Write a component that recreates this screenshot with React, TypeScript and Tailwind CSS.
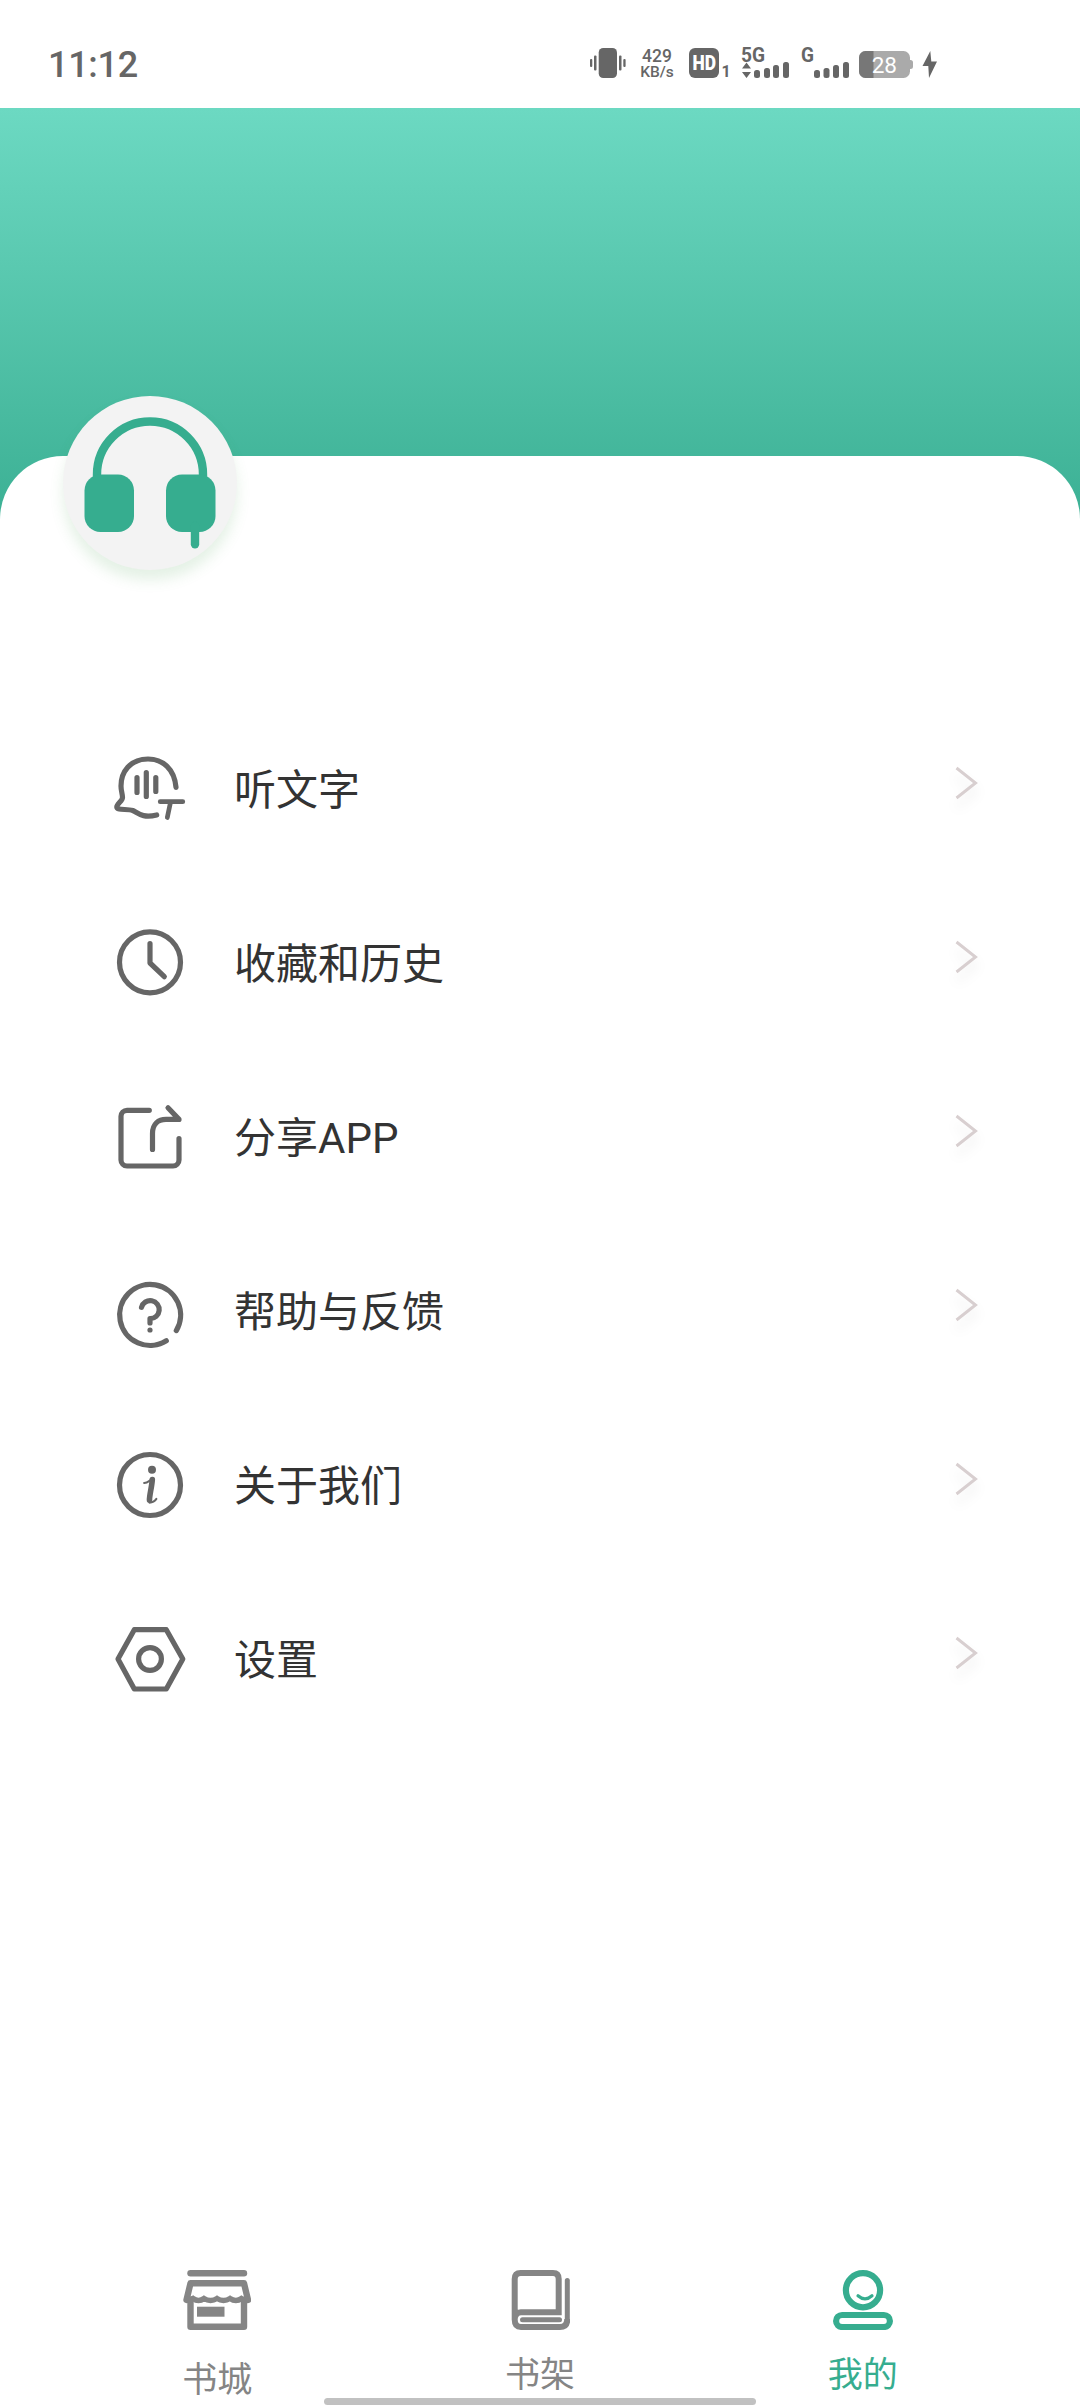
import type { ReactNode } from "react";

const menuItems: { label: string; icon: ReactNode }[] = [
  {
    label: "听文字",
    icon: (
      <>
        <path d="M66 38.3C64.5 20 53 10 38 10C20 10 11 23 11 37C11 42 12.5 45 12.5 48.5C12.5 52 6.8 55 6.8 58C7 61.8 17 59.5 22.7 61.5C28 63.8 32 69.5 46.7 66" />
        <path d="M27 28.5v15M36.3 23.5v24M45.8 28.5v14" />
        <path d="M50.2 52.7h22.6M60.3 54.3L57.3 68.5" strokeWidth={4.7} />
      </>
    ),
  },
  {
    label: "收藏和历史",
    icon: (
      <>
        <circle cx="40" cy="39.3" r="30.5" />
        <path d="M40 20.5V40L54.3 53.7" />
      </>
    ),
  },
  {
    label: "分享APP",
    icon: (
      <>
        <path d="M39.3 13.3H17a6 6 0 0 0-6 6V63a6 6 0 0 0 6 6H63a6 6 0 0 0 6-6V41.5" />
        <path d="M42.5 52.5V36.5C42.5 27 48.5 22.4 56 22.4H69L58 10.8" />
      </>
    ),
  },
  {
    label: "帮助与反馈",
    icon: (
      <>
        <path d="M66.3 59.6A30.5 30.5 0 1 0 56.3 69.8" />
        <path d="M31.5 36.3A9 9 0 1 1 40 47.6V52" />
        <circle cx="40" cy="59" r="2.6" fill="currentColor" stroke="none" />
      </>
    ),
  },
  {
    label: "关于我们",
    icon: (
      <>
        <circle cx="40" cy="40" r="30.5" />
        <circle cx="42" cy="24.7" r="4" fill="currentColor" stroke="none" />
        <path d="M42.3 34.5C41.8 42 39.3 51 39.5 55" strokeWidth={5.6} />
        <path d="M34.2 38C37 37.8 39 36 41.5 34.5M39.5 57.6C42.5 57.6 45 56 46.3 54" strokeWidth={2.2} />
      </>
    ),
  },
  {
    label: "设置",
    icon: (
      <>
        <path d="M8 40L24.3 10.7H56.3L72.8 40L56.3 70H24.3Z" />
        <circle cx="40" cy="40" r="11.4" />
      </>
    ),
  },
];

function StatusBar() {
  return (
    <header className="flex h-[108px] items-start pt-12 pl-12 font-[Roboto,sans-serif] text-[#666]">
      <div className="-mt-[1px] w-[541px] text-[36px] leading-9 font-medium tracking-[-0.3px]">
        11:12
      </div>
      <svg className="h-[30px] w-[38px]" viewBox="0 0 38 30" fill="currentColor">
        <rect x="9.7" y="0" width="18.3" height="30" rx="4.5" />
        <rect x="1" y="11" width="2.3" height="8" rx="1" />
        <rect x="5" y="7.5" width="2.5" height="15" rx="1" />
        <rect x="30" y="7.5" width="2.5" height="15" rx="1" />
        <rect x="34.3" y="11" width="2.3" height="8" rx="1" />
      </svg>
      <div className="ml-3 flex w-9 flex-col items-center font-medium">
        <span className="text-[17.5px] leading-4">429</span>
        <span className="text-[15.5px] leading-4">KB/s</span>
      </div>
      <svg className="ml-[14px] h-[30px] w-[42px] overflow-visible" viewBox="0 0 42 30" fill="currentColor">
        <rect width="30" height="30" rx="6" />
        <text x="3.5" y="22" fontSize="19.5" fontWeight="900" textLength="23.5" lengthAdjust="spacingAndGlyphs" fill="#fff">
          HD
        </text>
        <text x="32.5" y="29" fontSize="16" fontWeight="700">
          1
        </text>
      </svg>
      <svg className="ml-[10px] h-[30px] w-[50px] overflow-visible" viewBox="0 0 50 30" fill="currentColor">
        <text x="0" y="14.3" fontSize="20" fontWeight="700" textLength="24" lengthAdjust="spacingAndGlyphs">
          5G
        </text>
        <path d="M5.5 14.5L10 20.5H1ZM5.5 30L1 24H10Z" />
        <rect x="13" y="22" width="6" height="8" rx="2.5" />
        <rect x="23" y="20" width="6" height="10" rx="2.5" />
        <rect x="32" y="17" width="6" height="13" rx="2.5" />
        <rect x="42" y="14" width="6" height="16" rx="2.5" />
      </svg>
      <svg className="ml-[10px] h-[30px] w-[49px] overflow-visible" viewBox="0 0 49 30" fill="currentColor">
        <text x="0" y="14.3" fontSize="20" fontWeight="700" textLength="13" lengthAdjust="spacingAndGlyphs">
          G
        </text>
        <rect x="13" y="22" width="6" height="8" rx="2.5" />
        <rect x="22.5" y="20" width="6" height="10" rx="2.5" />
        <rect x="32" y="17" width="6" height="13" rx="2.5" />
        <rect x="42" y="14" width="6" height="16" rx="2.5" />
      </svg>
      <svg className="ml-[9px] h-[30px] w-[54px]" viewBox="0 0 54 30">
        <path d="M50 12h1.5a2.5 2.5 0 0 1 2.5 2.5v4a2.5 2.5 0 0 1-2.5 2.5H50z" fill="#aaa" />
        <rect y="3" width="51" height="27" rx="6.5" fill="#aaa" />
        <path d="M14.5 3H6.5A6.5 6.5 0 0 0 0 9.5v14A6.5 6.5 0 0 0 6.5 30h8z" fill="#777" />
        <text x="25.3" y="24.7" textAnchor="middle" fontSize="22.5" fill="#fff">
          28
        </text>
      </svg>
      <svg className="ml-[9px] h-[30px] w-4" viewBox="0 0 16 30" fill="currentColor">
        <path d="M8.3 3L0.5 18H6.3L7 30L15 13.5H9.3Z" />
      </svg>
    </header>
  );
}

function Avatar() {
  return (
    <div className="relative -top-[60px] ml-[63px] size-[174px] rounded-full bg-[#f3f3f3] shadow-[0_10px_14px_rgba(76,160,80,0.15)]">
      <svg className="size-full text-[#36ad8f]" viewBox="0 0 174 174" fill="currentColor">
        <path d="M34 82V78.5a53 53 0 0 1 106 0V82" fill="none" stroke="currentColor" strokeWidth="8.4" />
        <rect x="21.5" y="78.5" width="49.5" height="57.5" rx="16" />
        <rect x="103" y="78.5" width="49.5" height="57.5" rx="16" />
        <path d="M132 130v18.2" stroke="currentColor" strokeWidth="8.4" strokeLinecap="round" />
      </svg>
    </div>
  );
}

function MenuRow({ label, icon }: { label: string; icon: ReactNode }) {
  return (
    <li className="flex h-[174px] items-center pr-[101px] pl-[110px]">
      <svg
        className="size-20 text-[#666]"
        viewBox="0 0 80 80"
        fill="none"
        stroke="currentColor"
        strokeWidth={5.2}
        strokeLinecap="round"
        strokeLinejoin="round"
      >
        {icon}
      </svg>
      <span className="ml-[44px] flex-1 pt-1 text-[42px] leading-[60px] text-[#333]">
        {label}
      </span>
      <svg
        className="mb-3 h-8 w-6 overflow-visible drop-shadow-[0_9px_6px_rgba(0,0,0,0.08)]"
        viewBox="0 0 24 32"
        fill="none"
        stroke="#d8cfd0"
        strokeWidth="3"
      >
        <path d="M1.5 1L20.5 16L1.5 31" />
      </svg>
    </li>
  );
}

function TabBar() {
  return (
    <nav className="flex h-[138px] px-14 text-[35px] leading-[50px] text-[#858585]">
      <div className="flex flex-1 flex-col items-center">
        <svg className="h-[60px] w-[68px]" viewBox="0 0 68 60" fill="none" stroke="currentColor" strokeWidth="6.4">
          <path d="M7.5 3.2H61" strokeLinecap="round" />
          <path d="M3.5 30L7.5 13.3H61L65 30" strokeLinejoin="round" strokeLinecap="round" />
          <path d="M3 29.5Q8 29.5 10 28.5Q15.5 32.5 21 28.5Q27.5 32.5 34 28.5Q40.5 32.5 47 28.5Q53 32.5 58.5 28.5Q61 30 65.5 29.5" strokeWidth="5.5" />
          <path d="M7.5 30V56.8H61V30" strokeLinejoin="round" />
          <path d="M14 41.7H41.5" strokeWidth="10" />
        </svg>
        <span className="mt-[26px]">书城</span>
      </div>
      <div className="flex flex-1 flex-col items-center">
        <svg className="h-[60px] w-[60px]" viewBox="0 0 60 60" fill="none" stroke="currentColor" strokeWidth="6">
          <path d="M4.7 50V9Q4.7 3 10.7 3H43Q48.7 3 48.7 9V42.2H11Q4.7 42.5 4.7 49.5Q4.7 57 11 57H50Q57.3 57 57.3 49" />
          <path d="M57.3 50V10.5" strokeWidth="5" strokeLinecap="round" />
          <path d="M12.5 49.8H49.5" strokeWidth="5" strokeLinecap="round" />
        </svg>
        <span className="mt-[21px]">书架</span>
      </div>
      <div className="flex flex-1 flex-col items-center text-[#36ad8f]">
        <svg className="size-[60px]" viewBox="0 0 60 60" fill="none" stroke="currentColor" strokeWidth="6.2">
          <circle cx="30" cy="20.2" r="17.1" />
          <path d="M25 25.8Q32 32 39 25.8" strokeWidth="3.2" strokeLinecap="round" />
          <rect x="3.1" y="45" width="53.8" height="12" rx="6" />
        </svg>
        <span className="mt-[21px]">我的</span>
      </div>
    </nav>
  );
}

export default function App() {
  return (
    <div className="flex h-[2408px] w-[1080px] flex-col overflow-hidden bg-white font-[Roboto,'Noto_Sans_CJK_SC',sans-serif]">
      <StatusBar />
      <div className="h-[414px] shrink-0 bg-linear-to-b from-[#6cd9c2] to-[#3bb094]" />
      <main className="relative -mt-[66px] flex-1 rounded-t-[63px] bg-white">
        <Avatar />
        <ul className="mt-[72px]">
          {menuItems.map((item) => (
            <MenuRow key={item.label} label={item.label} icon={item.icon} />
          ))}
        </ul>
      </main>
      <TabBar />
      <div className="absolute top-[2398px] left-[324px] h-[7px] w-[432px] rounded-full bg-[#c1c1c1]" />
    </div>
  );
}
